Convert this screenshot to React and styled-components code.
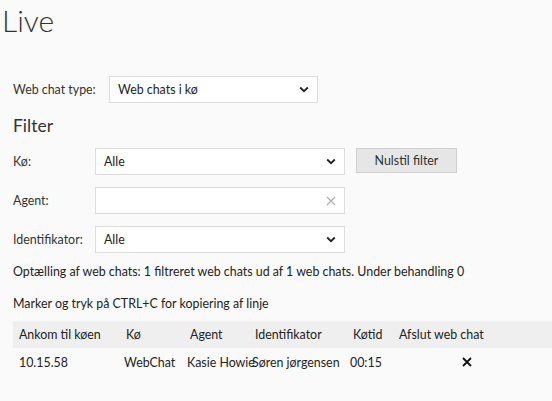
import React from "react";
import styled, { createGlobalStyle } from "styled-components";

const Global = createGlobalStyle`
  html, body {
    margin: 0;
    padding: 0;
    background: #fafafa;
  }
  body {
    font-family: "Segoe UI", "Lato", sans-serif;
    font-size: 12.4px;
    color: #222;
  }
`;

const Page = styled.div`
  width: 552px;
  height: 401px;
  overflow: hidden;
  background: #fafafa;
`;

const Title = styled.h1`
  margin: 0;
  padding: 0 0 0 2px;
  height: 44px;
  font-family: "Segoe UI Light", "Lato", sans-serif;
  font-weight: 300;
  font-size: 30px;
  line-height: 40px;
  color: #333;
`;

const Content = styled.div`
  padding: 32px 0 0 13px;
  display: flex;
  flex-direction: column;
`;

const FieldRow = styled.div`
  display: flex;
  align-items: center;
  height: 27px;
  margin-bottom: ${(p) => p.$mb || 0}px;
`;

const Label = styled.label`
  width: ${(p) => p.$w}px;
  flex: none;
  color: #333;
`;

const Box = styled.div`
  box-sizing: border-box;
  width: ${(p) => p.$w}px;
  height: 27px;
  display: flex;
  align-items: center;
  justify-content: space-between;
  padding: 0 8px 0 8px;
  background: #fff;
  border: 1px solid #dcdcdc;
  color: #222;
`;

const SubTitle = styled.h2`
  margin: 12px 0 11px;
  font-weight: 400;
  font-size: 17.5px;
  line-height: 22px;
  color: #333;
`;

const ResetButton = styled.button`
  box-sizing: border-box;
  width: 101px;
  height: 25px;
  margin-left: 11px;
  align-self: flex-start;
  background: #e6e6e6;
  border: 1px solid #cfcfcf;
  font: inherit;
  color: #333;
  padding: 0;
`;

const Info = styled.p`
  margin: ${(p) => p.$mt}px 0 0;
  line-height: 17px;
  color: #222;
`;

const Grid = styled.div`
  display: grid;
  grid-template-columns: 106px 64px 65px 98px 47px 1fr;
  align-items: center;
  height: ${(p) => p.$h}px;
  background: ${(p) => (p.$head ? "#efefef" : "transparent")};
  margin-top: ${(p) => p.$mt || 0}px;
`;

const Cell = styled.div`
  padding-left: ${(p) => p.$pl ?? 6}px;
  white-space: nowrap;
  color: #222;
`;

const Chevron = () => (
  <svg width="10" height="7" viewBox="0 0 10 7">
    <polyline points="1.2,1.5 5,5.2 8.8,1.5" fill="none" stroke="#222" strokeWidth="1.8" />
  </svg>
);

const Cross = ({ size = 10, color = "#222", w = 1.8 }) => (
  <svg width={size} height={size} viewBox="0 0 10 10">
    <path d="M1 1 L9 9 M9 1 L1 9" stroke={color} strokeWidth={w} fill="none" />
  </svg>
);

const Select = ({ w, value }) => (
  <Box $w={w}>
    <span>{value}</span>
    <Chevron />
  </Box>
);

export default function App() {
  return (
    <Page>
      <Global />
      <Title>Live</Title>
      <Content>
        <FieldRow>
          <Label $w={96}>Web chat type:</Label>
          <Select w={209} value="Web chats i kø" />
        </FieldRow>
        <SubTitle>Filter</SubTitle>
        <FieldRow $mb={12}>
          <Label $w={82}>Kø:</Label>
          <Select w={250} value="Alle" />
          <ResetButton>Nulstil filter</ResetButton>
        </FieldRow>
        <FieldRow $mb={12}>
          <Label $w={82}>Agent:</Label>
          <Box $w={250}>
            <span />
            <Cross size={10} color="#aaa" w={1.1} />
          </Box>
        </FieldRow>
        <FieldRow>
          <Label $w={82}>Identifikator:</Label>
          <Select w={250} value="Alle" />
        </FieldRow>
        <Info $mt={10}>
          Optælling af web chats: 1 filtreret web chats ud af 1 web chats. Under behandling 0
        </Info>
        <Info $mt={15}>Marker og tryk på CTRL+C for kopiering af linje</Info>
        <Grid $head $h={27} $mt={9}>
          <Cell>Ankom til køen</Cell>
          <Cell $pl={7}>Kø</Cell>
          <Cell $pl={7}>Agent</Cell>
          <Cell $pl={7}>Identifikator</Cell>
          <Cell $pl={7}>Køtid</Cell>
          <Cell>Afslut web chat</Cell>
        </Grid>
        <Grid $h={28}>
          <Cell>10.15.58</Cell>
          <Cell $pl={5}>WebChat</Cell>
          <Cell $pl={4}>Kasie Howie</Cell>
          <Cell $pl={4}>Søren jørgensen</Cell>
          <Cell $pl={4}>00:15</Cell>
          <Cell $pl={69}>
            <Cross size={10} color="#111" w={1.8} />
          </Cell>
        </Grid>
      </Content>
    </Page>
  );
}
